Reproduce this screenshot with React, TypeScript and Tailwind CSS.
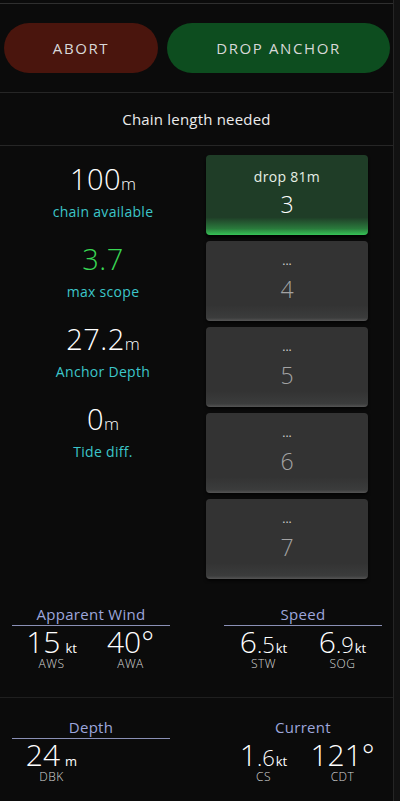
import React from "react";

const font = { fontFamily: "'Open Sans', Lato, sans-serif" };

function LeftStat({ value, unit, label, valueClass }: { value: string; unit?: string; label: string; valueClass?: string }) {
  return (
    <div className="h-[80px] flex flex-col items-center pt-[8px]">
      <div className={`flex items-baseline leading-[32px] h-[32px] ${valueClass ?? "text-white"}`}>
        <span className="text-[29px] font-light tracking-[0.5px]">{value}</span>
        {unit && <span className="text-[17px] font-light leading-[17px]">{unit}</span>}
      </div>
      <div className="text-[14px] text-[#3cc6ca] leading-[18px] mt-[8px] tracking-[0.3px]">{label}</div>
    </div>
  );
}

function Card({ top, num, active }: { top: string; num: string; active?: boolean }) {
  if (active) {
    return (
      <div className="h-[80px] rounded-[4px] bg-[linear-gradient(to_bottom,#1f3d27_0%,#1f3d27_78%,#2a7a3c_92%,#36c356_100%)] flex flex-col items-center pt-[12px] shadow-[0_3px_3px_rgba(0,0,0,0.8)]">
        <div className="text-[14px] text-[#e6efe6] leading-[20px] tracking-[0.3px]">{top}</div>
        <div className="text-[23px] font-light text-white leading-[28px] mt-[3px]">{num}</div>
      </div>
    );
  }
  return (
    <div className="h-[80px] rounded-[4px] bg-[linear-gradient(to_bottom,#333333_0%,#333333_80%,#3b3c3c_96%,#555_100%)] flex flex-col items-center pt-[11px] shadow-[0_2px_3px_rgba(0,0,0,0.7)]">
      <div className="text-[12px] text-[#d0d0d0] leading-[18px]">...</div>
      <div className="text-[23px] font-light text-[#a3a3a3] leading-[28px] mt-[5px]">{num}</div>
    </div>
  );
}

function Val({ big, dec, unit, label, unitGap }: { big: string; dec?: string; unit?: string; label: string; unitGap?: boolean }) {
  return (
    <div className="flex-1 flex flex-col items-center">
      <div className="flex items-baseline leading-[27px] h-[27px] text-white">
        <span className="text-[30px] font-light">{big}</span>
        {dec && <span className="text-[22px] font-light leading-[20px]">{dec}</span>}
        {unit && <span className={`text-[13px] leading-[13px] ${unitGap ? "ml-[5px]" : "ml-[1px]"}`}>{unit}</span>}
      </div>
      <div className="text-[12px] font-light text-[#d6d6d6] leading-[14px] tracking-[0.5px] mt-[2px]">{label}</div>
    </div>
  );
}

export default function App() {
  return (
    <div className="w-[400px] h-[801px] bg-[#0b0b0b] flex overflow-hidden" style={font}>
      <div className="w-[394px] flex flex-col border-r border-[#252525]">
        <div className="h-[3px]" />
        <div className="border-t border-[#2f2f2f] flex gap-[9px] pl-[4px] pr-[3px] pt-[19px] pb-[19px] border-b border-b-[#262626]">
          <button className="w-[154px] h-[50px] rounded-full bg-[#4a150d] text-[#d8d8d8] text-[15px] tracking-[1.6px]">ABORT</button>
          <button className="flex-1 h-[50px] rounded-full bg-[#0d4d1f] text-[#d8d8d8] text-[15px] tracking-[1.6px]">DROP ANCHOR</button>
        </div>
        <div className="h-[53px] flex items-center justify-center text-[15px] text-[#ececec] border-b border-[#262626] tracking-[0.2px]">
          Chain length needed
        </div>
        <div className="flex pt-[9px]">
          <div className="w-[206px] flex flex-col">
            <LeftStat value="100" unit="m" label="chain available" />
            <LeftStat value="3.7" label="max scope" valueClass="text-[#39d654]" />
            <LeftStat value="27.2" unit="m" label="Anchor Depth" />
            <LeftStat value="0" unit="m" label="Tide diff." />
          </div>
          <div className="w-[162px] flex flex-col gap-[6px]">
            <Card top="drop 81m" num="3" active />
            <Card top="..." num="4" />
            <Card top="..." num="5" />
            <Card top="..." num="6" />
            <Card top="..." num="7" />
          </div>
        </div>
        <div className="flex pt-[25px] h-[119px] border-b border-[#1f1f1f]">
          <div className="ml-[12px] w-[158px] flex flex-col">
            <div className="text-center text-[15px] text-[#9da6dc] leading-[20px] border-b border-[#8a90b6] pb-[1px] tracking-[0.3px]">Apparent Wind</div>
            <div className="flex pt-[2px]">
              <Val big="15" unit="kt" label="AWS" unitGap />
              <Val big="40°" label="AWA" />
            </div>
          </div>
          <div className="ml-[54px] w-[158px] flex flex-col">
            <div className="text-center text-[15px] text-[#9da6dc] leading-[20px] border-b border-[#8a90b6] pb-[1px] tracking-[0.3px]">Speed</div>
            <div className="flex pt-[2px]">
              <Val big="6" dec=".5" unit="kt" label="STW" />
              <Val big="6" dec=".9" unit="kt" label="SOG" />
            </div>
          </div>
        </div>
        <div className="flex pt-[19px]">
          <div className="ml-[12px] w-[158px] flex flex-col">
            <div className="text-center text-[15px] text-[#9da6dc] leading-[20px] border-b border-[#8a90b6] pb-[1px] tracking-[0.3px]">Depth</div>
            <div className="flex pt-[2px]">
              <Val big="24" unit="m" label="DBK" unitGap />
              <div className="flex-1" />
            </div>
          </div>
          <div className="ml-[54px] w-[158px] flex flex-col">
            <div className="text-center text-[15px] text-[#9da6dc] leading-[20px] pb-[1px] border-b border-transparent tracking-[0.3px]">Current</div>
            <div className="flex pt-[2px]">
              <Val big="1" dec=".6" unit="kt" label="CS" />
              <Val big="121°" label="CDT" />
            </div>
          </div>
        </div>
      </div>
      <div className="flex-1 bg-[#121212]" />
    </div>
  );
}
